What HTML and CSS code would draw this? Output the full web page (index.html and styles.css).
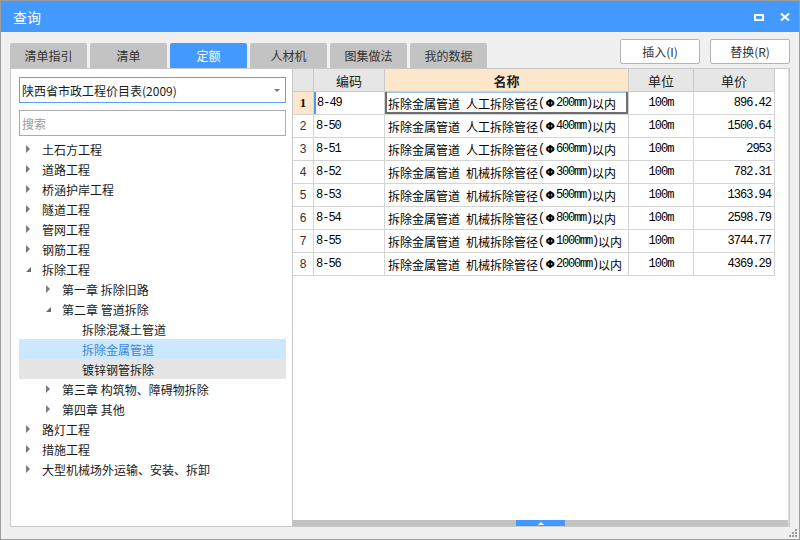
FILE: index.html
```html
<!DOCTYPE html>
<html lang="zh-CN">
<head>
<meta charset="utf-8">
<title>查询</title>
<link rel="stylesheet" href="styles.css">
</head>
<body>
<div class="window">
  <div class="titlebar">
    <div class="title">查询</div>
    <div class="winbtns">
      <svg class="wb" width="10" height="7" viewBox="0 0 10 7"><path d="M0 0H10V7H0Z M2 2V5H8V2Z" fill="#fff" fill-rule="evenodd"/></svg>
      <svg class="wb" width="10" height="8" viewBox="0 0 10 8"><path d="M1 0.5L9 7.5M9 0.5L1 7.5" stroke="#fff" stroke-width="2" fill="none"/></svg>
    </div>
  </div>

  <div class="toolbar">
    <div class="tabs">
      <div class="tab">清单指引</div>
      <div class="tab">清单</div>
      <div class="tab active">定额</div>
      <div class="tab">人材机</div>
      <div class="tab">图集做法</div>
      <div class="tab">我的数据</div>
    </div>
    <div class="actions">
      <div class="btn">插入(I)</div>
      <div class="btn">替换(R)</div>
    </div>
  </div>

  <div class="main">
    <div class="left">
      <div class="select"><span class="select-text">陕西省市政工程价目表(2009)</span><span class="caret"></span></div>
      <div class="search">搜索</div>
      <div class="tree">
        <div class="row l0"><span class="tw c"></span><span>土石方工程</span></div>
        <div class="row l0"><span class="tw c"></span><span>道路工程</span></div>
        <div class="row l0"><span class="tw c"></span><span>桥涵护岸工程</span></div>
        <div class="row l0"><span class="tw c"></span><span>隧道工程</span></div>
        <div class="row l0"><span class="tw c"></span><span>管网工程</span></div>
        <div class="row l0"><span class="tw c"></span><span>钢筋工程</span></div>
        <div class="row l0"><span class="tw e"></span><span>拆除工程</span></div>
        <div class="row l1"><span class="tw c"></span><span>第一章 拆除旧路</span></div>
        <div class="row l1"><span class="tw e"></span><span>第二章 管道拆除</span></div>
        <div class="row l2"><span class="tw"></span><span>拆除混凝土管道</span></div>
        <div class="row l2 selected"><span class="tw"></span><span>拆除金属管道</span></div>
        <div class="row l2 hover"><span class="tw"></span><span>镀锌钢管拆除</span></div>
        <div class="row l1"><span class="tw c"></span><span>第三章 构筑物、障碍物拆除</span></div>
        <div class="row l1"><span class="tw c"></span><span>第四章 其他</span></div>
        <div class="row l0"><span class="tw c"></span><span>路灯工程</span></div>
        <div class="row l0"><span class="tw c"></span><span>措施工程</span></div>
        <div class="row l0"><span class="tw c"></span><span>大型机械场外运输、安装、拆卸</span></div>
      </div>
    </div>

    <div class="right">
      <div class="grid">
        <div class="cell hd"></div>
        <div class="cell hd">编码</div>
        <div class="cell hd name-hd">名称</div>
        <div class="cell hd">单位</div>
        <div class="cell hd">单价</div>

        <div class="cell rn cur">1</div>
        <div class="cell code curcode">8-49</div>
        <div class="cell name cursel">拆除金属管道<span class="a"> </span>人工拆除管径<span class="a">(</span><span class="phi">Φ</span><span class="a">200mm)</span>以内</div>
        <div class="cell unit">100m</div>
        <div class="cell price">896.42</div>

        <div class="cell rn">2</div>
        <div class="cell code">8-50</div>
        <div class="cell name">拆除金属管道<span class="a"> </span>人工拆除管径<span class="a">(</span><span class="phi">Φ</span><span class="a">400mm)</span>以内</div>
        <div class="cell unit">100m</div>
        <div class="cell price">1500.64</div>

        <div class="cell rn">3</div>
        <div class="cell code">8-51</div>
        <div class="cell name">拆除金属管道<span class="a"> </span>人工拆除管径<span class="a">(</span><span class="phi">Φ</span><span class="a">600mm)</span>以内</div>
        <div class="cell unit">100m</div>
        <div class="cell price">2953</div>

        <div class="cell rn">4</div>
        <div class="cell code">8-52</div>
        <div class="cell name">拆除金属管道<span class="a"> </span>机械拆除管径<span class="a">(</span><span class="phi">Φ</span><span class="a">300mm)</span>以内</div>
        <div class="cell unit">100m</div>
        <div class="cell price">782.31</div>

        <div class="cell rn">5</div>
        <div class="cell code">8-53</div>
        <div class="cell name">拆除金属管道<span class="a"> </span>机械拆除管径<span class="a">(</span><span class="phi">Φ</span><span class="a">500mm)</span>以内</div>
        <div class="cell unit">100m</div>
        <div class="cell price">1363.94</div>

        <div class="cell rn">6</div>
        <div class="cell code">8-54</div>
        <div class="cell name">拆除金属管道<span class="a"> </span>机械拆除管径<span class="a">(</span><span class="phi">Φ</span><span class="a">800mm)</span>以内</div>
        <div class="cell unit">100m</div>
        <div class="cell price">2598.79</div>

        <div class="cell rn">7</div>
        <div class="cell code">8-55</div>
        <div class="cell name">拆除金属管道<span class="a"> </span>机械拆除管径<span class="a">(</span><span class="phi">Φ</span><span class="a">1000mm)</span>以内</div>
        <div class="cell unit">100m</div>
        <div class="cell price">3744.77</div>

        <div class="cell rn">8</div>
        <div class="cell code">8-56</div>
        <div class="cell name">拆除金属管道<span class="a"> </span>机械拆除管径<span class="a">(</span><span class="phi">Φ</span><span class="a">2000mm)</span>以内</div>
        <div class="cell unit">100m</div>
        <div class="cell price">4369.29</div>
      </div>
      <div class="spacer"></div>
      <div class="hscroll"><div class="thumb"><span class="up"></span></div></div>
    </div>
  </div>

  <svg class="grip" width="8" height="8" viewBox="0 0 8 8">
    <rect x="6" y="0" width="2" height="2" fill="#9a9a9a"/>
    <rect x="3" y="3" width="2" height="2" fill="#9a9a9a"/>
    <rect x="6" y="3" width="2" height="2" fill="#9a9a9a"/>
    <rect x="0" y="6" width="2" height="2" fill="#9a9a9a"/>
    <rect x="3" y="6" width="2" height="2" fill="#9a9a9a"/>
    <rect x="6" y="6" width="2" height="2" fill="#9a9a9a"/>
  </svg>
</div>
</body>
</html>
```

FILE: styles.css
```css
* { box-sizing: border-box; }
html, body { margin: 0; padding: 0; }
body {
  font-family: "Noto Sans CJK SC", "Noto Sans", sans-serif;
  font-size: 12px;
  color: #1a1a1a;
  background: #ffffff;
}

.window {
  position: relative;
  width: 800px;
  height: 540px;
  border: 1px solid #9d9d9d;
  background: #f0f0f0;
  display: flex;
  flex-direction: column;
}

/* title bar */
.titlebar {
  height: 31px;
  flex: none;
  background: #4499ff;
  color: #ffffff;
  display: flex;
  align-items: center;
  padding: 0 9px 0 12px;
}
.title { flex: 1; font-size: 14px; line-height: 1; }
.winbtns { display: flex; align-items: center; gap: 16px; padding-top: 1px; }
.wb { display: block; }

/* toolbar / tabs */
.toolbar {
  height: 36px;
  flex: none;
  display: flex;
  align-items: flex-start;
  padding: 0 9px;
}
.tabs { flex: 1; display: flex; gap: 3px; margin-top: 11px; }
.tab {
  width: 77px;
  height: 25px;
  background: #c3c3c3;
  border-radius: 2px 2px 0 0;
  color: #333333;
  display: flex;
  align-items: center;
  justify-content: center;
  font-size: 12px;
}
.tab.active { background: #4499ff; color: #ffffff; }
.actions { display: flex; gap: 10px; margin-top: 7px; }
.btn {
  width: 80px;
  height: 25px;
  background: #ffffff;
  border: 1px solid #b4b4b4;
  border-radius: 2px;
  color: #333333;
  display: flex;
  align-items: center;
  justify-content: center;
  font-size: 12px;
}

/* main area */
.main {
  height: 459px;
  flex: none;
  margin: 0 9px;
  border: 1px solid #c9c9c9;
  background: #ffffff;
  display: flex;
}

.left {
  width: 282px;
  flex: none;
  border-right: 1px solid #c9c9c9;
  padding: 8px 6px 0 8px;
  display: flex;
  flex-direction: column;
}
.select {
  height: 26px;
  border: 1px solid #5aa2f2;
  display: flex;
  align-items: center;
  padding-left: 2px;
  color: #1a1a1a;
}
.select-text { flex: 1; }
.caret {
  width: 0; height: 0;
  border-left: 3px solid transparent;
  border-right: 3px solid transparent;
  border-top: 3px solid #7a7a7a;
  margin-right: 5px;
}
.search {
  height: 26px;
  margin-top: 7px;
  border: 1px solid #acacac;
  display: flex;
  align-items: center;
  padding-left: 2px;
  color: #9b9b9b;
}
.tree { margin-top: 3px; display: flex; flex-direction: column; }
.row {
  height: 20px;
  display: flex;
  align-items: center;
  color: #1a1a1a;
  white-space: nowrap;
}
.row.l0 { padding-left: 7px; }
.row.l1 { padding-left: 27px; }
.row.l2 { padding-left: 47px; }
.row.selected { background: #cce8ff; color: #3a86dc; }
.row.hover { background: #e5e5e5; }
.tw { width: 16px; height: 20px; flex: none; display: flex; align-items: center; }
.tw.c::before {
  content: "";
  width: 0; height: 0;
  border-left: 4px solid #7c7c7c;
  border-top: 4px solid transparent;
  border-bottom: 4px solid transparent;
}
.tw.e::before {
  content: "";
  width: 0; height: 0;
  border-bottom: 5px solid #6a6a6a;
  border-left: 5px solid transparent;
  margin-top: 1px;
}

/* right / table */
.right {
  flex: 1;
  display: flex;
  flex-direction: column;
  border-right: 1px solid #dcdcdc;
}
.grid {
  width: 482px;
  display: grid;
  grid-template-columns: 21px 71px 244px 65px 81px;
  grid-auto-rows: 23px;
}
.cell {
  border-right: 1px solid #d4d4d4;
  border-bottom: 1px solid #d4d4d4;
  display: flex;
  align-items: center;
  white-space: pre;
  overflow: hidden;
  color: #000000;
}
.hd {
  background: #e6e6e6;
  justify-content: center;
  font-size: 13px;
  color: #222222;
  border-color: #cacaca;
}
.hd.name-hd { background: #fde6c9; font-weight: bold; }
.rn {
  justify-content: center;
  font-family: "Liberation Sans", sans-serif;
  font-size: 12px;
  color: #333333;
}
.rn.cur {
  background: #fde6c9;
  font-family: "Liberation Serif", serif;
  font-weight: bold;
  font-size: 13px;
  color: #111111;
}
.code {
  padding-left: 2px;
  font-family: "Liberation Mono", monospace;
  font-size: 12px;
  letter-spacing: -1px;
}
.curcode { box-shadow: inset 2px 0 0 #4499ff; padding-left: 3px; }
.name { padding-left: 3px; font-size: 12px; }
.name .a {
  font-family: "Liberation Mono", monospace;
  font-size: 12px;
  letter-spacing: -1.2px;
}
.name .phi {
  display: inline-block;
  width: 12px;
  text-align: center;
  font-family: "DejaVu Sans", sans-serif;
  font-size: 11px;
  font-weight: bold;
}
.cursel {
  box-shadow: inset 2px 0 0 #6d6d6d, inset -2px 0 0 #6d6d6d, inset 0 -2px 0 #6d6d6d, inset 0 1px 0 #9cc8f5;
}
.unit {
  justify-content: center;
  font-family: "Liberation Mono", monospace;
  font-size: 12px;
  letter-spacing: -1px;
}
.price {
  justify-content: flex-end;
  padding-right: 3px;
  font-family: "Liberation Mono", monospace;
  font-size: 12px;
  letter-spacing: -1px;
}
.spacer { flex: 1; }
.hscroll {
  height: 6px;
  flex: none;
  background: #c2c2c2;
  display: flex;
  justify-content: center;
}
.thumb {
  width: 49px;
  background: #4499ff;
  display: flex;
  align-items: center;
  justify-content: center;
}
.up {
  width: 0; height: 0;
  border-left: 3px solid transparent;
  border-right: 3px solid transparent;
  border-bottom: 3px solid #ffffff;
}

.grip { position: absolute; right: 2px; bottom: 2px; }
```
